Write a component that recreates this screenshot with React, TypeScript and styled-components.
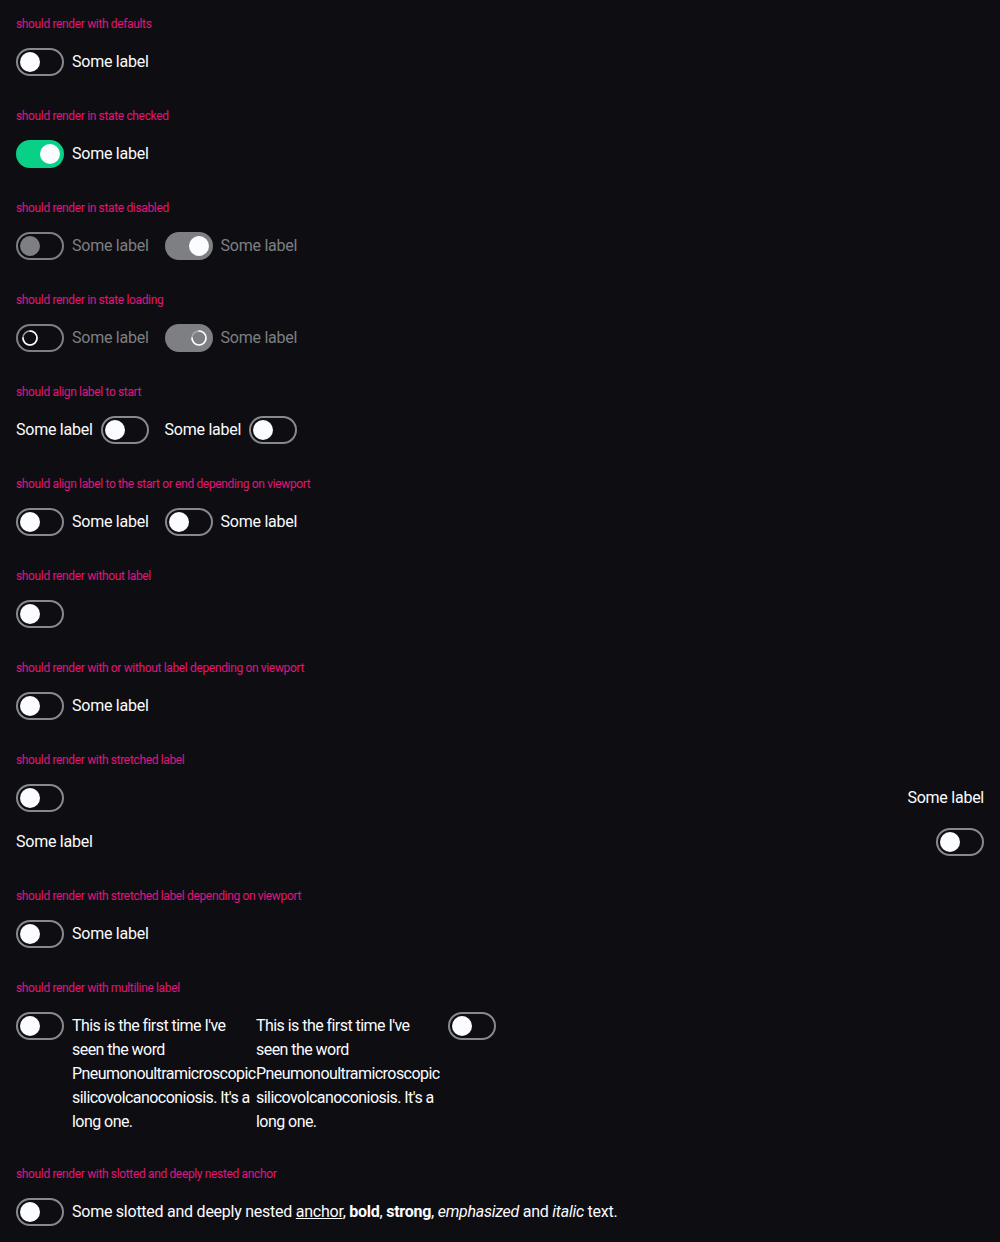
import React from 'react';
import styled, { createGlobalStyle, css } from 'styled-components';

const GlobalStyle = createGlobalStyle`
  html, body {
    margin: 0;
    padding: 0;
    background: #0e0e12;
  }
  body {
    font-family: Roboto, "Liberation Sans", sans-serif;
    color: #fbfcff;
  }
  * { box-sizing: border-box; }
`;

const Page = styled.main`
  display: flex;
  flex-direction: column;
  width: 1000px;
`;

const Section = styled.section`
  padding: 16px;
  display: flex;
  flex-direction: column;
`;

const Heading = styled.h2`
  margin: 1px 0 17px;
  font-size: 12px;
  line-height: 14px;
  font-weight: 400;
  color: #e0157e;
  letter-spacing: -0.35px;
`;

const Row = styled.div<{ $stack?: boolean; $gap?: number; $top?: boolean }>`
  display: flex;
  flex-direction: ${(p) => (p.$stack ? 'column' : 'row')};
  gap: ${(p) => (p.$gap ?? 16)}px;
  align-items: ${(p) => (p.$top ? 'flex-start' : p.$stack ? 'stretch' : 'center')};
`;

const Item = styled.label<{ $stretch?: boolean; $top?: boolean; $width?: number }>`
  display: flex;
  gap: 8px;
  align-items: ${(p) => (p.$top ? 'flex-start' : 'center')};
  justify-content: ${(p) => (p.$stretch ? 'space-between' : 'flex-start')};
  ${(p) => p.$width && css`width: ${p.$width}px;`}
  cursor: pointer;
`;

const Track = styled.span<{ $checked?: boolean; $dim?: boolean }>`
  flex: 0 0 auto;
  position: relative;
  display: inline-flex;
  align-items: center;
  width: 48px;
  height: 28px;
  border-radius: 14px;
  border: 2px solid ${(p) => (p.$dim ? '#7e7f82' : p.$checked ? '#09d087' : '#88898c')};
  background: ${(p) => (p.$checked ? (p.$dim ? '#7e7f82' : '#09d087') : 'transparent')};
  padding: 0 2px;
`;

const Knob = styled.span<{ $checked?: boolean; $muted?: boolean }>`
  display: block;
  width: 20px;
  height: 20px;
  border-radius: 50%;
  background: ${(p) => (p.$muted ? '#7e7f82' : '#fbfcff')};
  transform: translateX(${(p) => (p.$checked ? 20 : 0)}px);
`;

const SpinnerBox = styled.span<{ $checked?: boolean }>`
  display: flex;
  align-items: center;
  justify-content: center;
  width: 20px;
  height: 20px;
  transform: translateX(${(p) => (p.$checked ? 20 : 0)}px);
`;

const Text = styled.span<{ $dim?: boolean; $multi?: boolean }>`
  font-size: 16px;
  line-height: 24px;
  letter-spacing: ${(p) => (p.$multi ? '-0.55px' : '-0.25px')};
  color: ${(p) => (p.$dim ? '#7e7f82' : '#fbfcff')};
  ${(p) => p.$multi && css`margin-top: 2px; min-width: 0;`}
  a { color: inherit; text-decoration: underline; }
  b, strong { font-weight: 700; }
`;

type ToggleProps = {
  checked?: boolean;
  disabled?: boolean;
  loading?: boolean;
  label?: React.ReactNode;
  start?: boolean;
  stretch?: boolean;
  multi?: boolean;
  width?: number;
};

const Spinner = ({ checked }: { checked?: boolean }) => (
  <SpinnerBox $checked={checked}>
    <svg width="18" height="18" viewBox="0 0 18 18">
      <circle cx="9" cy="9" r="7" fill="none" stroke={checked ? '#a8a9ac' : '#9a9b9e'} strokeWidth="1.6" />
      <path d="M9 2 A7 7 0 1 1 2 9" fill="none" stroke="#fbfcff" strokeWidth="1.6" strokeLinecap="round" />
    </svg>
  </SpinnerBox>
);

const Toggle = ({ checked, disabled, loading, label, start, stretch, multi, width }: ToggleProps) => {
  const dim = disabled || loading;
  const track = (
    <Track $checked={checked} $dim={dim}>
      {loading ? <Spinner checked={checked} /> : <Knob $checked={checked} $muted={disabled && !checked} />}
    </Track>
  );
  const text = label ? (
    <Text $dim={dim} $multi={multi}>
      {label}
    </Text>
  ) : null;
  return (
    <Item $stretch={stretch} $top={multi} $width={width}>
      {start ? (
        <>
          {text}
          {track}
        </>
      ) : (
        <>
          {track}
          {text}
        </>
      )}
    </Item>
  );
};

const longText = (
  <>
    This is the first time I've seen the word Pneumonoultramicroscopic<wbr />silicovolcanoconiosis. It's a long one.
  </>
);

export default function App() {
  return (
    <>
      <GlobalStyle />
      <Page>
        <Section>
          <Heading>should render with defaults</Heading>
          <Row>
            <Toggle label="Some label" />
          </Row>
        </Section>
        <Section>
          <Heading>should render in state checked</Heading>
          <Row>
            <Toggle checked label="Some label" />
          </Row>
        </Section>
        <Section>
          <Heading>should render in state disabled</Heading>
          <Row>
            <Toggle disabled label="Some label" />
            <Toggle disabled checked label="Some label" />
          </Row>
        </Section>
        <Section>
          <Heading>should render in state loading</Heading>
          <Row>
            <Toggle loading label="Some label" />
            <Toggle loading checked label="Some label" />
          </Row>
        </Section>
        <Section>
          <Heading>should align label to start</Heading>
          <Row>
            <Toggle start label="Some label" />
            <Toggle start label="Some label" />
          </Row>
        </Section>
        <Section>
          <Heading>should align label to the start or end depending on viewport</Heading>
          <Row>
            <Toggle label="Some label" />
            <Toggle label="Some label" />
          </Row>
        </Section>
        <Section>
          <Heading>should render without label</Heading>
          <Row>
            <Toggle />
          </Row>
        </Section>
        <Section>
          <Heading>should render with or without label depending on viewport</Heading>
          <Row>
            <Toggle label="Some label" />
          </Row>
        </Section>
        <Section>
          <Heading>should render with stretched label</Heading>
          <Row $stack>
            <Toggle stretch label="Some label" />
            <Toggle stretch start label="Some label" />
          </Row>
        </Section>
        <Section>
          <Heading>should render with stretched label depending on viewport</Heading>
          <Row>
            <Toggle label="Some label" />
          </Row>
        </Section>
        <Section>
          <Heading>should render with multiline label</Heading>
          <Row $top $gap={0}>
            <Toggle multi width={240} label={longText} />
            <Toggle multi start width={240} label={longText} />
          </Row>
        </Section>
        <Section>
          <Heading>should render with slotted and deeply nested anchor</Heading>
          <Row>
            <Toggle
              label={
                <>
                  Some slotted and deeply nested <a href="#">anchor</a>, <b>bold</b>, <strong>strong</strong>,{' '}
                  <em>emphasized</em> and <i>italic</i> text.
                </>
              }
            />
          </Row>
        </Section>
      </Page>
    </>
  );
}
